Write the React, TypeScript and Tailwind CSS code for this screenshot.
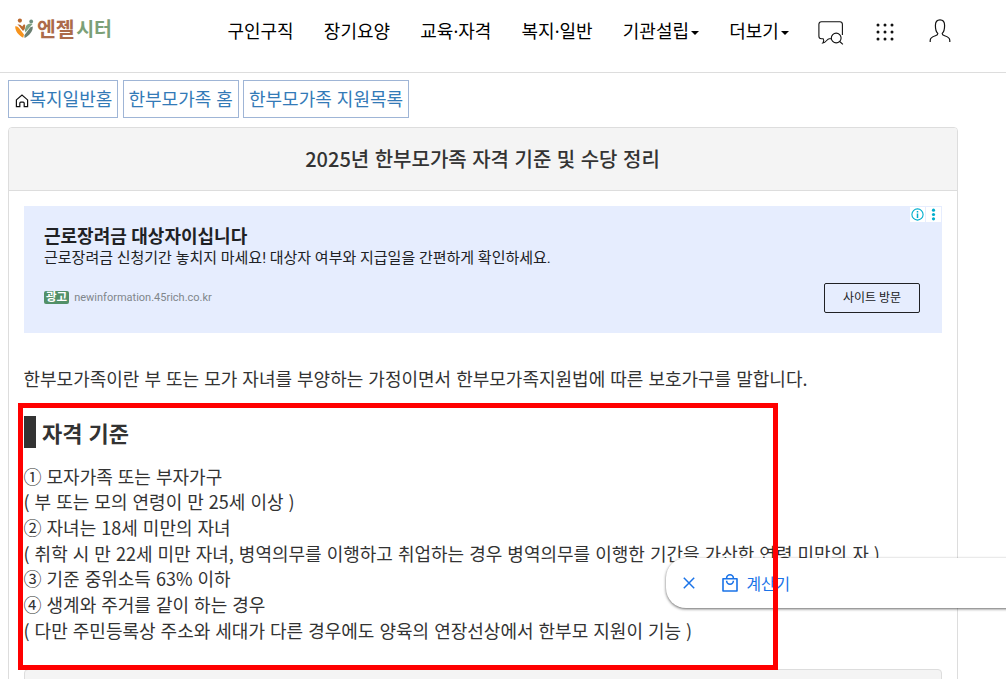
import type { ReactNode } from "react";
import clsx from "clsx";

interface NavItem {
    label: string;
    caret?: boolean;
}

const navItems: NavItem[] = [
    { label: "구인구직" },
    { label: "장기요양" },
    { label: "교육·자격" },
    { label: "복지·일반" },
    { label: "기관설립", caret: true },
    { label: "더보기", caret: true },
];

const criteria = [
    "① 모자가족 또는 부자가구",
    "( 부 또는 모의 연령이 만 25세 이상 )",
    "② 자녀는 18세 미만의 자녀",
    "( 취학 시 만 22세 미만 자녀, 병역의무를 이행하고 취업하는 경우 병역의무를 이행한 기간을 가산한 연령 미만의 자 )",
    "③ 기준 중위소득 63% 이하",
    "④ 생계와 주거를 같이 하는 경우",
    "( 다만 주민등록상 주소와 세대가 다른 경우에도 양육의 연장선상에서 한부모 지원이 기능 )",
];

const Logo = () => (
    <a className="flex items-center" href="#">
        <svg width="19" height="21" viewBox="0 0 19 21" fill="none">
            <circle cx="4.9" cy="2.6" r="2.1" fill="#b9692f" />
            <circle cx="16.2" cy="3.4" r="1.9" fill="#6f9080" />
            <path d="M.2 8.4C1.6 8 3 8.8 4.4 10.6L9 16.4 8.2 19.8C3.4 17 .2 13 .2 8.4Z" fill="#f7941d" />
            <path d="M2.4 6.6C4.4 6 6 6.8 7.2 8.4L9 6.2 10.2 7 9.8 11 8 13 5.2 9.4C4.4 8.2 3.4 7.4 2.4 6.6Z" fill="#b9692f" />
            <path d="M9.6 20 9.4 17.2 15.4 9.2 17.8 8.6C18 13.4 14.6 17.6 9.6 20Z" fill="#6b7f72" />
            <path d="M10.8 8.4C12.6 6 15 5 17.6 6L13.6 10.6 10.4 14.6 9.8 12Z" fill="#7fa383" />
        </svg>
        <span className="ml-[3px] text-[20.5px] font-bold leading-[26px] tracking-[-0.2px] text-[#ac6b4a]">엔젤</span>
        <span className="ml-[2px] text-[19.5px] font-bold leading-[26px] tracking-[-0.3px] text-[#7ba077]">시터</span>
    </a>
);

const ChatSearchIcon = () => (
    <svg className="mt-[2px]" width="26" height="25" viewBox="0 0 26 25" fill="none" stroke="#111" strokeWidth="1.1">
        <path d="M13 17.8H11.2C9 17.8 8.2 21.6 4.8 22 6.2 20.4 6.2 19.4 5.2 17.8H3.4A2.5 2.5 0 0 1 .9 15.3V3.2A2.5 2.5 0 0 1 3.4.8H21.9A2.5 2.5 0 0 1 24.4 3.2V14" />
        <circle cx="18.2" cy="17" r="4.9" />
        <path d="m21.7 20.5 3.2 2.8" />
    </svg>
);

const GridIcon = () => (
    <svg width="18" height="18" viewBox="0 0 18 18" fill="#111">
        {[2, 9, 16].map((y) =>
            [2, 9, 16].map((x) => <circle key={`${x}-${y}`} cx={x} cy={y} r="1.5" />)
        )}
    </svg>
);

const UserIcon = () => (
    <svg width="22" height="24" viewBox="0 0 22 24" fill="none" stroke="#111" strokeWidth="1.2">
        <path d="M1.2 23V21.4C1.2 18.8 3.2 17.8 6.4 16.8 8.4 16.2 8.8 15.6 8.8 14.4 7 12.8 6.4 10.2 6.4 6.4 6.4 2.8 8 .8 11 .8S15.6 2.8 15.6 6.4C15.6 10.2 15 12.8 13.2 14.4 13.2 15.6 13.6 16.2 15.6 16.8 18.8 17.8 20.8 18.8 20.8 21.4V23" />
    </svg>
);

const HomeIcon = () => (
    <svg className="mt-[5px]" width="14" height="14" viewBox="0 0 14 14" fill="none" stroke="#111" strokeWidth="1.2">
        <path d="M1.4 5.9 7 1 12.6 5.9V12.6H9.2V9.2A1 1 0 0 0 8.2 8.2H5.8A1 1 0 0 0 4.8 9.2V12.6H1.4Z" />
    </svg>
);

const TabLink = ({ className, children }: { className: string; children: ReactNode }) => (
    <a
        href="#"
        className={clsx(
            "flex h-[38px] items-center whitespace-nowrap border border-[#9fb5d6] pb-[2px] text-[18px] leading-[34px] text-[#337ab7]",
            className
        )}
    >
        {children}
    </a>
);

const Header = () => (
    <header className="flex h-[73px] border-b border-[#ddd] pl-[15px] text-black">
        <div className="w-[212.4px] pt-[15px]">
            <Logo />
        </div>
        <nav className="flex h-[63px] items-center gap-[30.2px] font-['Noto_Sans','Noto_Sans_CJK_KR',sans-serif] text-[18px]">
            {navItems.map((item) => (
                <a key={item.label} href="#" className="flex items-center whitespace-nowrap">
                    {item.label}
                    {item.caret && (
                        <span className="ml-[2px] mt-[3px] border-x-4 border-t-4 border-x-transparent border-t-black" />
                    )}
                </a>
            ))}
        </nav>
        <div className="ml-[29px] flex h-[64px] items-center">
            <ChatSearchIcon />
            <div className="ml-[32px]">
                <GridIcon />
            </div>
            <div className="mb-[2px] ml-[35px]">
                <UserIcon />
            </div>
        </div>
    </header>
);

const AdBanner = () => (
    <div className="relative h-[127px] bg-[#e6edfe] pl-[20px] pt-[20px] font-[Roboto,'Noto_Sans_CJK_KR',sans-serif] text-[#202124] [word-spacing:0]">
        <div className="text-[18px] font-bold leading-[22px]">근로장려금 대상자이십니다</div>
        <div className="text-[15px] leading-[20px]">
            근로장려금 신청기간 놓치지 마세요! 대상자 여부와 지급일을 간편하게 확인하세요.
        </div>
        <div className="flex justify-between pr-[22px] pt-[15px]">
            <div className="flex h-[29px] items-center text-[11px] text-[#80868b]">
                <span className="mr-[5px] h-[13px] rounded-[2px] bg-[#529068] px-[2px] text-[11.5px] font-bold leading-[12px] text-white">
                    광고
                </span>
                <span className="pt-[2px]">newinformation.45rich.co.kr</span>
            </div>
            <button className="h-[30px] w-[96px] rounded-[2px] border border-[#202124] text-[12px] leading-[28px]">
                사이트 방문
            </button>
        </div>
        <div className="absolute right-[1px] top-[1px] flex gap-px">
            <span className="flex size-[15px] items-center justify-center bg-white">
                <svg width="13" height="13" viewBox="0 0 13 13" fill="none" stroke="#00aecd">
                    <circle cx="6.5" cy="6.5" r="5.6" strokeWidth="1.1" />
                    <path d="M6.5 5.5V10M6.5 3V4.4" strokeWidth="1.5" />
                </svg>
            </span>
            <span className="flex size-[15px] items-center justify-center bg-white">
                <svg width="5" height="13" viewBox="0 0 5 13" fill="#00aecd">
                    <circle cx="2.5" cy="2.2" r="1.6" />
                    <circle cx="2.5" cy="6.5" r="1.6" />
                    <circle cx="2.5" cy="10.8" r="1.6" />
                </svg>
            </span>
        </div>
    </div>
);

const CalculatorBar = () => (
    <div className="absolute left-[666px] top-[558px] z-10 flex h-[50px] w-[360px] items-center rounded-l-[20px] bg-white pl-[17px] text-[#1a73e8] shadow-[0_1px_3px_rgba(0,0,0,0.6)]">
        <svg width="12" height="12" viewBox="0 0 12 12" fill="none" stroke="#1a73e8" strokeWidth="1.5">
            <path d="m.8.8 10.4 10.4M11.2.8.8 11.2" />
        </svg>
        <svg className="mb-[1px] ml-[27px]" width="16" height="18" viewBox="0 0 16 18" fill="none" stroke="#1a73e8" strokeWidth="1.6">
            <path d="M1 4.8H15V17H1Z" strokeLinejoin="round" />
            <path d="M4.6 4.5V4.2a3.4 3.4 0 0 1 6.8 0V4.5M4.6 6.8a3.4 3.4 0 0 0 6.8 0" />
        </svg>
        <span className="ml-[8.5px] mt-[3px] font-[Roboto,'Noto_Sans_CJK_KR',sans-serif] text-[15.8px] leading-[24px]">계산기</span>
    </div>
);

export default function App() {
    return (
        <div className="relative h-[679px] w-[1006px] overflow-hidden bg-white font-['Noto_Sans_CJK_KR',sans-serif] text-[18px] text-[#333] [word-spacing:1px]">
            <Header />
            <div className="flex pl-[8px] pt-[7px]">
                <TabLink className="w-[110px] pl-[6px]">
                    <HomeIcon />
                    <span className="ml-[0.5px]">복지일반홈</span>
                </TabLink>
                <TabLink className="ml-[5px] w-[116px] pl-[4.5px]">한부모가족 홈</TabLink>
                <TabLink className="ml-[4px] w-[166px] pl-[5px]">한부모가족 지원목록</TabLink>
            </div>

            <main className="ml-[8px] mt-[9px] h-[600px] w-[950px] rounded-t-[4px] border border-[#ddd]">
                <h1 className="h-[63px] rounded-t-[3px] border-b border-[#ddd] bg-[#f4f4f4] pr-[1px] text-center text-[20px] font-medium leading-[62px]">
                    2025년 한부모가족 자격 기준 및 수당 정리
                </h1>
                <div className="p-[15px]">
                    <AdBanner />
                    <p className="-ml-[0.5px] mt-[32px] leading-[26px]">
                        한부모가족이란 부 또는 모가 자녀를 부양하는 가정이면서 한부모가족지원법에 따른 보호가구를 말합니다.
                    </p>
                    <h2 className="mt-[25px] border-l-[12px] border-[#333] pl-[6px] text-[22px] font-bold leading-[32px]">
                        자격 기준
                    </h2>
                    <div className="-ml-[0.5px] mt-[15.6px] whitespace-nowrap leading-[25.7px]">
                        {criteria.map((line) => (
                            <div key={line}>{line}</div>
                        ))}
                    </div>
                    <div className="mt-[25.4px] h-[40px] rounded-t-[4px] border border-[#ddd] bg-[#f4f4f4]" />
                </div>
            </main>

            <CalculatorBar />
            {/* highlight frame around the criteria */}
            <div className="pointer-events-none absolute left-[18px] top-[403px] z-20 h-[267px] w-[760px] border-[5px] border-[#ff0000]" />
        </div>
    );
}
